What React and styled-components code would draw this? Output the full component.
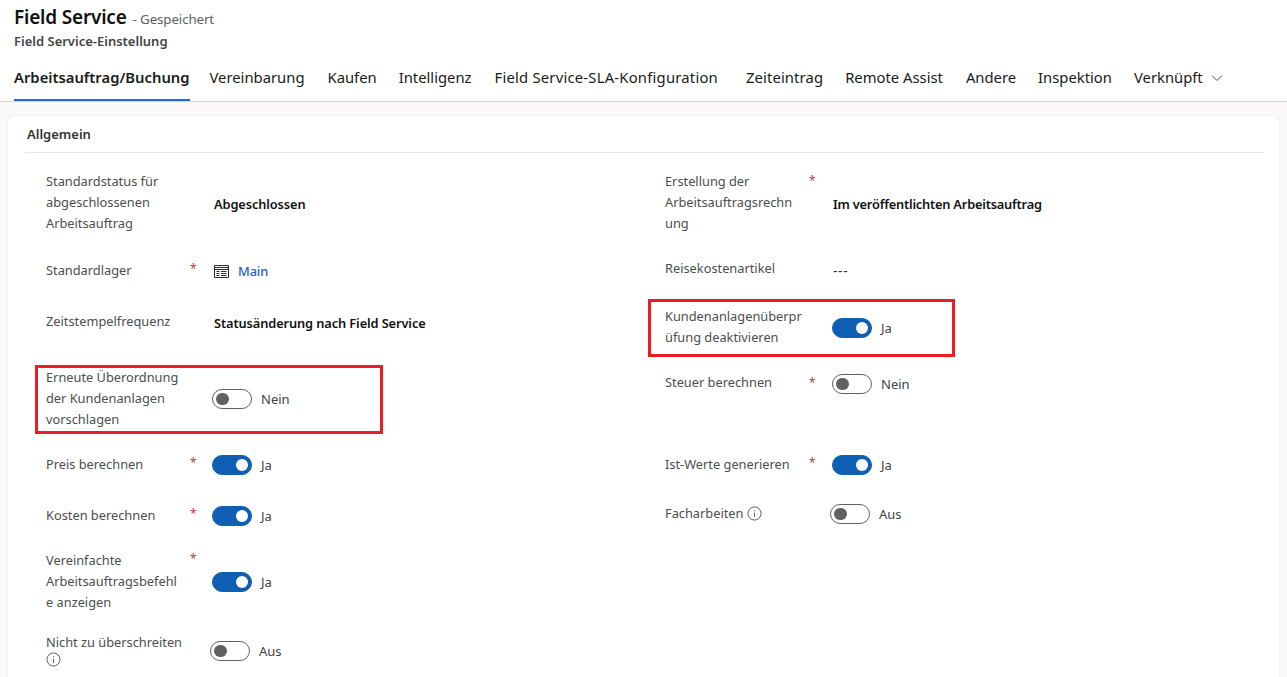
import React from "react";
import styled, { createGlobalStyle } from "styled-components";

const Global = createGlobalStyle`
  html, body { margin: 0; padding: 0; height: 100%; overflow: hidden; background: #faf9f8; }
  body { font-family: "Noto Sans", "Open Sans", sans-serif; color: #1a1a1a; }
  #root { height: 100%; }
`;
const Page = styled.div`height: 677px; overflow: hidden; display: flex; flex-direction: column;`;
const Header = styled.header`
  background: #fff; border-bottom: 1px solid #d6d6d6; height: 94px; flex: none;
  padding: 7px 14px 0; display: flex; flex-direction: column; box-sizing: content-box;
`;
const TitleRow = styled.div`display: flex; align-items: baseline; gap: 6px; height: 22px; line-height: 22px;`;
const Title = styled.h1`margin: 0; font-size: 19px; font-weight: 600; color: #111; letter-spacing: -0.2px; margin-top: -1px;`;
const Saved = styled.span`font-size: 13.3px; color: #605e5c; letter-spacing: -0.1px;`;
const Sub = styled.div`font-size: 13px; font-weight: 600; color: #444; margin-top: 3px; line-height: 18px;`;
const Tabs = styled.nav`display: flex; margin-top: 12px; height: 39px;`;
const Tab = styled.div`
  margin-left: ${p => p.$ml ?? 23}px; height: 39px; line-height: 31px; box-sizing: border-box;
  font-size: 14.8px; color: #1a1a1a; white-space: nowrap; display: flex; align-items: flex-start; gap: 8px;
  letter-spacing: ${p => p.$ls ?? 0}px; font-weight: ${p => p.$active ? 600 : 400};
  border-bottom: 2px solid ${p => p.$active ? "#2266e3" : "transparent"};
`;
const Chevron = styled.svg`width: 12px; height: 12px; margin-top: 10px; color: #555;`;
const Body = styled.main`flex: 1; padding: 14px 8px 0; min-height: 0; overflow: hidden;`;
const Card = styled.section`
  background: #fff; border-radius: 6px; height: 600px; width: 1271px; box-sizing: border-box;
  box-shadow: 0 0 2px rgba(0,0,0,.1); padding: 0 15px 0 17px;
`;
const SectionHead = styled.h2`
  margin: 0; height: 36px; line-height: 36px; padding-left: 2px; border-bottom: 1px solid #e6e6e6;
  font-size: 13px; font-weight: 600; color: #333;
`;
const Columns = styled.div`display: grid; grid-template-columns: 619px 1fr; padding: 17px 0 0 21px;`;
const Column = styled.div`display: flex; flex-direction: column;`;
const Row = styled.div`
  position: relative; display: flex; align-items: center; height: ${p => p.$h}px; margin-top: ${p => p.$mt || 0}px;
`;
const Highlight = styled.div`
  position: absolute; border: 3px solid #ed1c24; box-sizing: border-box; pointer-events: none;
  left: ${p => p.$l}px; top: ${p => p.$t}px; width: ${p => p.$w}px; height: ${p => p.$hh}px;
`;
const LabelBlock = styled.div`display: flex; align-items: flex-start; width: 168px; flex: none;`;
const Label = styled.div`
  width: 144px; flex: none; font-size: 12.8px; line-height: 21px; color: #4d4d4d; white-space: nowrap;
  transform: translateY(${p => p.$dy || 0}px);
`;
const Req = styled.span`color: #d13438; font-size: 12px; line-height: 18px;`;
const Value = styled.div`
  font-size: 12.8px; font-weight: 600; color: #111; white-space: nowrap; letter-spacing: ${p => p.$ls ?? -0.1}px;
  display: flex; align-items: center; gap: 9px; transform: translateY(${p => p.$dy || 0}px);
`;
const Link = styled.span`color: #1f5fbf; font-weight: 500;`;
const Plain = styled.div`font-size: 14px; color: #333; letter-spacing: 0.6px; transform: translateY(1px);`;
const ToggleWrap = styled.div`
  display: flex; align-items: center; gap: 9px; margin-left: ${p => p.$ml ?? -2}px;
  transform: translateY(${p => p.$dy ?? 1}px);
`;
const Track = styled.span`
  width: 40px; height: 20px; box-sizing: border-box; border-radius: 10px; flex: none; display: flex; align-items: center;
  padding: 0 3px; background: ${p => p.$on ? "#0f5fb5" : "#fff"}; border: 1px solid ${p => p.$on ? "#0f5fb5" : "#616161"};
  justify-content: ${p => p.$on ? "flex-end" : "flex-start"};
`;
const Knob = styled.span`width: 12.5px; height: 12.5px; border-radius: 50%; background: ${p => p.$on ? "#fff" : "#616161"};`;
const ToggleText = styled.span`font-size: 13px; color: #424242;`;

const InfoSvg = styled.svg`
  width: 15px; height: 15px; color: #555;
  display: ${p => p.$block ? "block" : "inline-block"};
  vertical-align: -3px; margin-top: ${p => p.$block ? -1 : 0}px;
`;
const Info = ({ block }) => (
  <InfoSvg $block={block} viewBox="0 0 16 16" fill="none" stroke="currentColor">
    <circle cx="8" cy="8" r="7" />
    <path d="M8 7v4.6M8 4.4v1.2" />
  </InfoSvg>
);
const Entity = () => (
  <svg width="15" height="13" viewBox="0 0 15 13" fill="none" stroke="#2b2b2b" strokeWidth="1">
    <path d="M.5.5h14v12H.5zM.5 2.5h14M.5 4.5h14M2.5 6.5h3M7 6.5h5.5M2.5 8.5h3M7 8.5h5.5M2.5 10.5h3M7 10.5h5.5" />
  </svg>
);
const Toggle = ({ on, text, ml, dy }) => (
  <ToggleWrap $ml={ml} $dy={dy}>
    <Track $on={on}><Knob $on={on} /></Track>
    <ToggleText>{text}</ToggleText>
  </ToggleWrap>
);
const Lbl = ({ req, dy, children }) => (
  <LabelBlock>
    <Label $dy={dy}>{children}</Label>
    {req && <Req>*</Req>}
  </LabelBlock>
);

export default function App() {
  return (
    <Page>
      <Global />
      <Header>
        <TitleRow><Title>Field Service</Title><Saved>- Gespeichert</Saved></TitleRow>
        <Sub>Field Service-Einstellung</Sub>
        <Tabs>
          <Tab $ml={0} $active>Arbeitsauftrag/Buchung</Tab>
          <Tab $ml={20}>Vereinbarung</Tab>
          <Tab>Kaufen</Tab>
          <Tab $ml={22}>Intelligenz</Tab>
          <Tab $ls={0.22}>Field Service-SLA-Konfiguration</Tab>
          <Tab $ml={28} $ls={0.12}>Zeiteintrag</Tab>
          <Tab $ml={22}>Remote Assist</Tab>
          <Tab>Andere</Tab>
          <Tab $ml={22}>Inspektion</Tab>
          <Tab $ml={22}>Verknüpft
            <Chevron viewBox="0 0 12 12" fill="none" stroke="currentColor"><path d="M1 3.5l5 5 5-5" /></Chevron>
          </Tab>
        </Tabs>
      </Header>
      <Body>
        <Card>
          <SectionHead>Allgemein</SectionHead>
          <Columns>
            <Column>
              <Row $h={66}>
                <Lbl dy={-1}>Standardstatus für<br />abgeschlossenen<br />Arbeitsauftrag</Lbl>
                <Value $dy={1}>Abgeschlossen</Value>
              </Row>
              <Row $h={68}>
                <Lbl req>Standardlager</Lbl>
                <Value $dy={1}><Entity /><Link>Main</Link></Value>
              </Row>
              <Row $h={36}>
                <Lbl dy={-1}>Zeitstempelfrequenz</Lbl>
                <Value $dy={1}>Statusänderung nach Field Service</Value>
              </Row>
              <Row $h={68} $mt={24}>
                <Highlight $l={-11} $t={1} $w={348} $hh={69} />
                <Lbl>Erneute Überordnung<br />der Kundenanlagen<br />vorschlagen</Lbl>
                <Toggle text="Nein" />
              </Row>
              <Row $h={32} $mt={16}>
                <Lbl req>Preis berechnen</Lbl>
                <Toggle on text="Ja" />
              </Row>
              <Row $h={32} $mt={19}>
                <Lbl req>Kosten berechnen</Lbl>
                <Toggle on text="Ja" />
              </Row>
              <Row $h={64} $mt={18}>
                <Lbl req>Vereinfachte<br />Arbeitsauftragsbefehl<br />e anzeigen</Lbl>
                <Toggle on text="Ja" />
              </Row>
              <Row $h={36} $mt={20}>
                <Lbl dy={-2}>Nicht zu überschreiten<Info block /></Lbl>
                <Toggle text="Aus" ml={-4} dy={0} />
              </Row>
            </Column>
            <Column>
              <Row $h={66}>
                <Lbl req dy={-1}>Erstellung der<br />Arbeitsauftragsrechn<br />ung</Lbl>
                <Value $dy={1} $ls={-0.2}>Im veröffentlichten Arbeitsauftrag</Value>
              </Row>
              <Row $h={66}>
                <Lbl dy={-1}>Reisekostenartikel</Lbl>
                <Plain>---</Plain>
              </Row>
              <Row $h={58} $mt={-2}>
                <Highlight $l={-17} $t={-1} $w={307} $hh={58} />
                <Lbl dy={-2}>Kundenanlagenüberpr<br />üfung deaktivieren</Lbl>
                <Toggle on text="Ja" ml={-1} dy={-1} />
              </Row>
              <Row $h={40} $mt={6}>
                <Lbl req dy={-2}>Steuer berechnen</Lbl>
                <Toggle text="Nein" ml={-1} dy={0} />
              </Row>
              <Row $h={32} $mt={44}>
                <Lbl req>Ist-Werte generieren</Lbl>
                <Toggle on text="Ja" ml={-1} />
              </Row>
              <Row $h={32} $mt={17}>
                <Lbl>Facharbeiten <Info /></Lbl>
                <Toggle text="Aus" ml={-3} />
              </Row>
            </Column>
          </Columns>
        </Card>
      </Body>
    </Page>
  );
}
